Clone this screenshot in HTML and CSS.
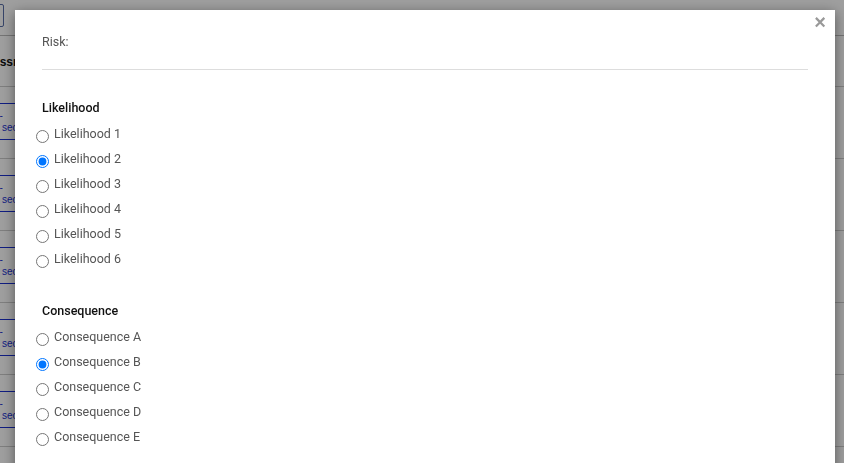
FILE: index.html
```html
<!DOCTYPE html>
<html lang="en">
<head>
  <meta charset="UTF-8" />
  <meta name="viewport" content="width=device-width, initial-scale=1.0" />
  <title>Risk assessment</title>
  <link rel="stylesheet" href="styles.css">
</head>
<body>
  <div class="page">
    <div class="toolbar">
      <button class="tool-btn">Export</button>
    </div>
    <table class="grid">
      <thead>
        <tr><th class="col-first"><span class="head-text">Assessment</span></th><th></th><th class="col-last">Date</th></tr>
      </thead>
      <tbody>
        <tr><td class="col-first"><a class="link-box" href="#"><span class="l1">Pre-</span><span class="l2">section</span></a></td><td></td><td class="col-last"><a href="#">2022</a></td></tr>
        <tr><td class="col-first"><a class="link-box" href="#"><span class="l1">Pre-</span><span class="l2">section</span></a></td><td></td><td class="col-last"></td></tr>
        <tr><td class="col-first"><a class="link-box" href="#"><span class="l1">Pre-</span><span class="l2">section</span></a></td><td></td><td class="col-last"></td></tr>
        <tr><td class="col-first"><a class="link-box" href="#"><span class="l1">Pre-</span><span class="l2">section</span></a></td><td></td><td class="col-last"></td></tr>
        <tr><td class="col-first"><a class="link-box" href="#"><span class="l1">Pre-</span><span class="l2">section</span></a></td><td></td><td class="col-last"></td></tr>
      </tbody>
    </table>
  </div>

  <div class="backdrop"></div>

  <div class="modal">
    <button class="close" aria-label="Close">&times;</button>
    <div class="modal-body">
      <div class="risk">Risk:</div>
      <hr>

      <div class="group-title">Likelihood</div>
      <label class="option"><input type="radio" name="likelihood"> Likelihood 1</label>
      <label class="option"><input type="radio" name="likelihood" checked> Likelihood 2</label>
      <label class="option"><input type="radio" name="likelihood"> Likelihood 3</label>
      <label class="option"><input type="radio" name="likelihood"> Likelihood 4</label>
      <label class="option"><input type="radio" name="likelihood"> Likelihood 5</label>
      <label class="option"><input type="radio" name="likelihood"> Likelihood 6</label>

      <div class="group-title group-gap">Consequence</div>
      <label class="option"><input type="radio" name="consequence"> Consequence A</label>
      <label class="option"><input type="radio" name="consequence" checked> Consequence B</label>
      <label class="option"><input type="radio" name="consequence"> Consequence C</label>
      <label class="option"><input type="radio" name="consequence"> Consequence D</label>
      <label class="option"><input type="radio" name="consequence"> Consequence E</label>
    </div>
  </div>
</body>
</html>
```

FILE: styles.css
```css
html, body {
  margin: 0;
  height: 100%;
  overflow: hidden;
}
body {
  font-family: 'Liberation Sans', Arial, sans-serif;
  background: #fff;
}
.page {
  width: 844px;
}
.toolbar {
  height: 36px;
  border-bottom: 1px solid #bbb;
  box-sizing: border-box;
  padding-top: 4px;
  margin-left: -60px;
}
.tool-btn {
  width: 64px;
  height: 23px;
  border: 1px solid #5a6fa8;
  border-radius: 2px;
  background: #fff;
  font-size: 12px;
  color: #333;
}
.grid {
  border-collapse: collapse;
  width: 904px;
  margin-left: -60px;
  table-layout: fixed;
}
.grid th,
.grid td {
  border-bottom: 1px solid #ccc;
  padding: 0;
  text-align: left;
}
.grid th {
  height: 50px;
  font-size: 12px;
  font-weight: bold;
  color: #111;
}
.grid td {
  height: 71px;
}
.col-first {
  width: 110px;
}
.col-last {
  width: 60px;
}
.head-text {
  display: block;
  margin-left: 31px;
  padding-top: 2px;
  white-space: nowrap;
}
.link-box {
  display: block;
  box-sizing: border-box;
  height: 37px;
  border-top: 1px solid #1a2fd0;
  border-bottom: 1px solid #1a2fd0;
  padding-top: 6px;
  font-size: 10px;
  line-height: 12px;
  color: #1a2fd0;
  text-decoration: none;
  margin-top: -2px;
}
.link-box span {
  display: block;
  white-space: nowrap;
}
.l1 {
  margin-left: 44px;
}
.l2 {
  margin-left: 62px;
}
.col-last a {
  display: block;
  font-size: 14px;
  color: #1a2fd0;
  text-decoration: none;
  margin-top: -34px;
  padding-left: 1px;
}
.backdrop {
  position: fixed;
  inset: 0;
  background: rgba(0, 0, 0, 0.38);
}
.modal {
  position: fixed;
  top: 10px;
  left: 15px;
  width: 820px;
  bottom: -40px;
  background: #fff;
  box-shadow: 0 3px 12px rgba(0, 0, 0, 0.45);
  font-family: Roboto, 'Liberation Sans', sans-serif;
}
.close {
  position: absolute;
  top: 2px;
  right: 9px;
  border: none;
  background: none;
  padding: 0;
  font-family: 'Liberation Sans', Arial, sans-serif;
  font-size: 20px;
  font-weight: bold;
  line-height: 20px;
  color: #999;
  cursor: pointer;
}
.modal-body {
  padding: 23px 27px 0;
}
.risk {
  font-size: 12.5px;
  line-height: 18px;
  color: #555;
}
hr {
  border: none;
  border-top: 1px solid #ddd;
  margin: 18px 0 0;
}
.group-title {
  margin-top: 29px;
  font-size: 12.5px;
  line-height: 18px;
  font-weight: 500;
  color: #111;
  margin-bottom: 4px;
}
.group-gap {
  margin-top: 31px;
}
.option {
  display: flex;
  align-items: center;
  height: 25px;
  font-size: 12.5px;
  color: #555;
  cursor: pointer;
}
.option input {
  width: 13px;
  height: 13px;
  margin: 5px 5px 0 -6px;
}
```
